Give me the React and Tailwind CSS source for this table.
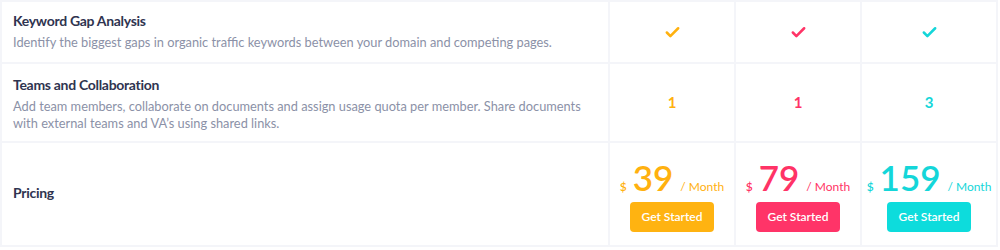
import { Check } from "lucide-react";

const plans = [
  { color: "text-[#ffb10f]", bg: "bg-[#ffb311]", team: 1, price: 39 },
  { color: "text-[#ff3366]", bg: "bg-[#ff3468]", team: 1, price: 79 },
  { color: "text-[#14d6d9]", bg: "bg-[#0ddcdc]", team: 3, price: 159 },
];

function Cell({ children, className = "" }) {
  return <div className={`bg-white flex items-center justify-center ${className}`}>{children}</div>;
}

export default function App() {
  return (
    <div className="w-[1000px] h-[250px] bg-white" style={{ fontFamily: "Lato, 'Noto Sans', sans-serif" }}>
      <div className="w-[998px] grid grid-cols-[606px_124px_124px_134px] grid-rows-[60px_77px_102px] gap-[2px] p-[2px] bg-[#f4f5f9]">
        <div className="bg-white flex flex-col justify-center px-[11px] pb-[2px]">
          <div className="text-[14px] font-bold text-[#2f3450] leading-[20px] tracking-[-0.3px]">Keyword Gap Analysis</div>
          <div className="text-[12.8px] text-[#8b91a7] leading-[18px] mt-[2px]">
            Identify the biggest gaps in organic traffic keywords between your domain and competing pages.
          </div>
        </div>
        {plans.map((p, i) => (
          <Cell key={"c" + i}>
            <Check className={p.color} size={17} strokeWidth={3.6} />
          </Cell>
        ))}

        <div className="bg-white flex flex-col justify-center px-[11px] pt-[2px]">
          <div className="text-[14px] font-bold text-[#2f3450] leading-[20px] tracking-[-0.3px]">Teams and Collaboration</div>
          <div className="text-[12.8px] text-[#8b91a7] leading-[17px] mt-[3px]">
            Add team members, collaborate on documents and assign usage quota per member. Share documents with external teams and VA’s using shared links.
          </div>
        </div>
        {plans.map((p, i) => (
          <Cell key={"t" + i}>
            <span className={`text-[15px] font-bold ${p.color}`}>{p.team}</span>
          </Cell>
        ))}

        <div className="bg-white flex items-center px-[11px] pb-[4px]">
          <div className="text-[14px] font-bold text-[#2f3450] tracking-[-0.3px]">Pricing</div>
        </div>
        {plans.map((p, i) => (
          <Cell key={"p" + i} className="flex-col pt-[2px]">
            <div className={`flex items-baseline gap-[6px] whitespace-nowrap ${p.color}`}>
              <span className="text-[12px] font-semibold">$</span>
              <span className="text-[35px] font-semibold leading-[36px]">{p.price}</span>
              <span className="text-[12px] ml-[1px]">/ Month</span>
            </div>
            <button
              type="button"
              className={`mt-[6px] h-[30px] w-[84px] rounded-[4px] text-white text-[12px] font-semibold ${p.bg}`}
            >
              Get Started
            </button>
          </Cell>
        ))}
      </div>
    </div>
  );
}
